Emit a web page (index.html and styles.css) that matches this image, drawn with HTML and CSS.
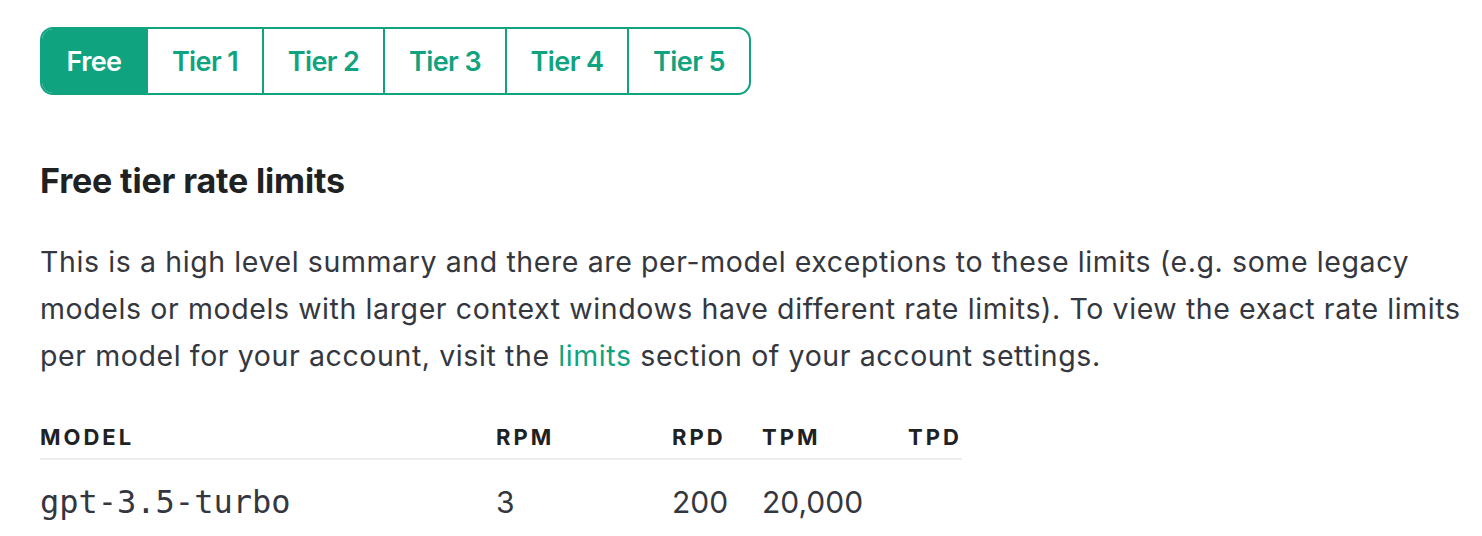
FILE: index.html
```html
<!DOCTYPE html>
<html>
<head>
<meta charset="utf-8">
<link rel="stylesheet" href="styles.css">
</head>
<body>
<div class="page">
  <div class="tabs">
    <div class="tab tab-active tab-free">Free</div>
    <div class="tab tab-1">Tier 1</div>
    <div class="tab tab-2">Tier 2</div>
    <div class="tab tab-3">Tier 3</div>
    <div class="tab tab-4">Tier 4</div>
    <div class="tab tab-5">Tier 5</div>
  </div>
  <h2 class="heading">Free tier rate limits</h2>
  <p class="summary">This is a high level summary and there are per-model exceptions to these limits (e.g. some legacy<br>models or models with larger context windows have different rate limits). To view the exact rate limits<br>per model for your account, visit the <a class="link" href="#">limits</a> section of your account settings.</p>
  <div class="table">
    <div class="row head">
      <div class="cell">MODEL</div>
      <div class="cell">RPM</div>
      <div class="cell">RPD</div>
      <div class="cell">TPM</div>
      <div class="cell">TPD</div>
    </div>
    <div class="row body">
      <div class="cell mono">gpt-3.5-turbo</div>
      <div class="cell">3</div>
      <div class="cell">200</div>
      <div class="cell">20,000</div>
      <div class="cell"></div>
    </div>
  </div>
</div>
</body>
</html>
```
FILE: styles.css
```css
html, body {
  margin: 0;
  padding: 0;
  background: #ffffff;
}
.page {
  padding: 27px 0 0 40px;
  font-family: Inter, "Liberation Sans", sans-serif;
  color: #353740;
}
.tabs {
  display: inline-flex;
  border: 2px solid #10a37f;
  border-radius: 13px;
  overflow: hidden;
  height: 64px;
}
.tab {
  display: flex;
  align-items: center;
  justify-content: center;
  font-size: 27px;
  font-weight: 600;
  color: #10a37f;
  letter-spacing: -0.6px;
  border-left: 2px solid #10a37f;
}
.tab-free { width: 104px; border-left: none; }
.tab-1 { width: 114px; }
.tab-2 { width: 119px; }
.tab-3 { width: 120px; }
.tab-4 { width: 120px; }
.tab-5 { width: 120px; }
.tab-active {
  background: #10a37f;
  color: #ffffff;
}
.heading {
  margin: 66px 0 0 0;
  font-size: 34px;
  font-weight: 700;
  color: #202123;
  line-height: 40px;
  letter-spacing: -0.15px;
}
.summary {
  margin: 37px 0 0 0;
  font-size: 28.5px;
  letter-spacing: 0.6px;
  line-height: 47px;
  color: #353740;
  white-space: nowrap;
}
.link {
  color: #10a37f;
  text-decoration: none;
}
.table {
  margin-top: 45px;
  width: 922px;
}
.row {
  display: grid;
  grid-template-columns: 456px 176px 90px 146px 54px;
}
.head {
  font-size: 22px;
  line-height: 26px;
  font-weight: 700;
  letter-spacing: 3px;
  color: #202123;
  height: 34px;
  border-bottom: 2px solid #ececf1;
  align-items: start;
}
.body {
  font-size: 30px;
  height: 84px;
  align-items: center;
  color: #353740;
}
.mono {
  font-family: "DejaVu Sans Mono", "Liberation Mono", monospace;
  font-size: 32px;
}
```
